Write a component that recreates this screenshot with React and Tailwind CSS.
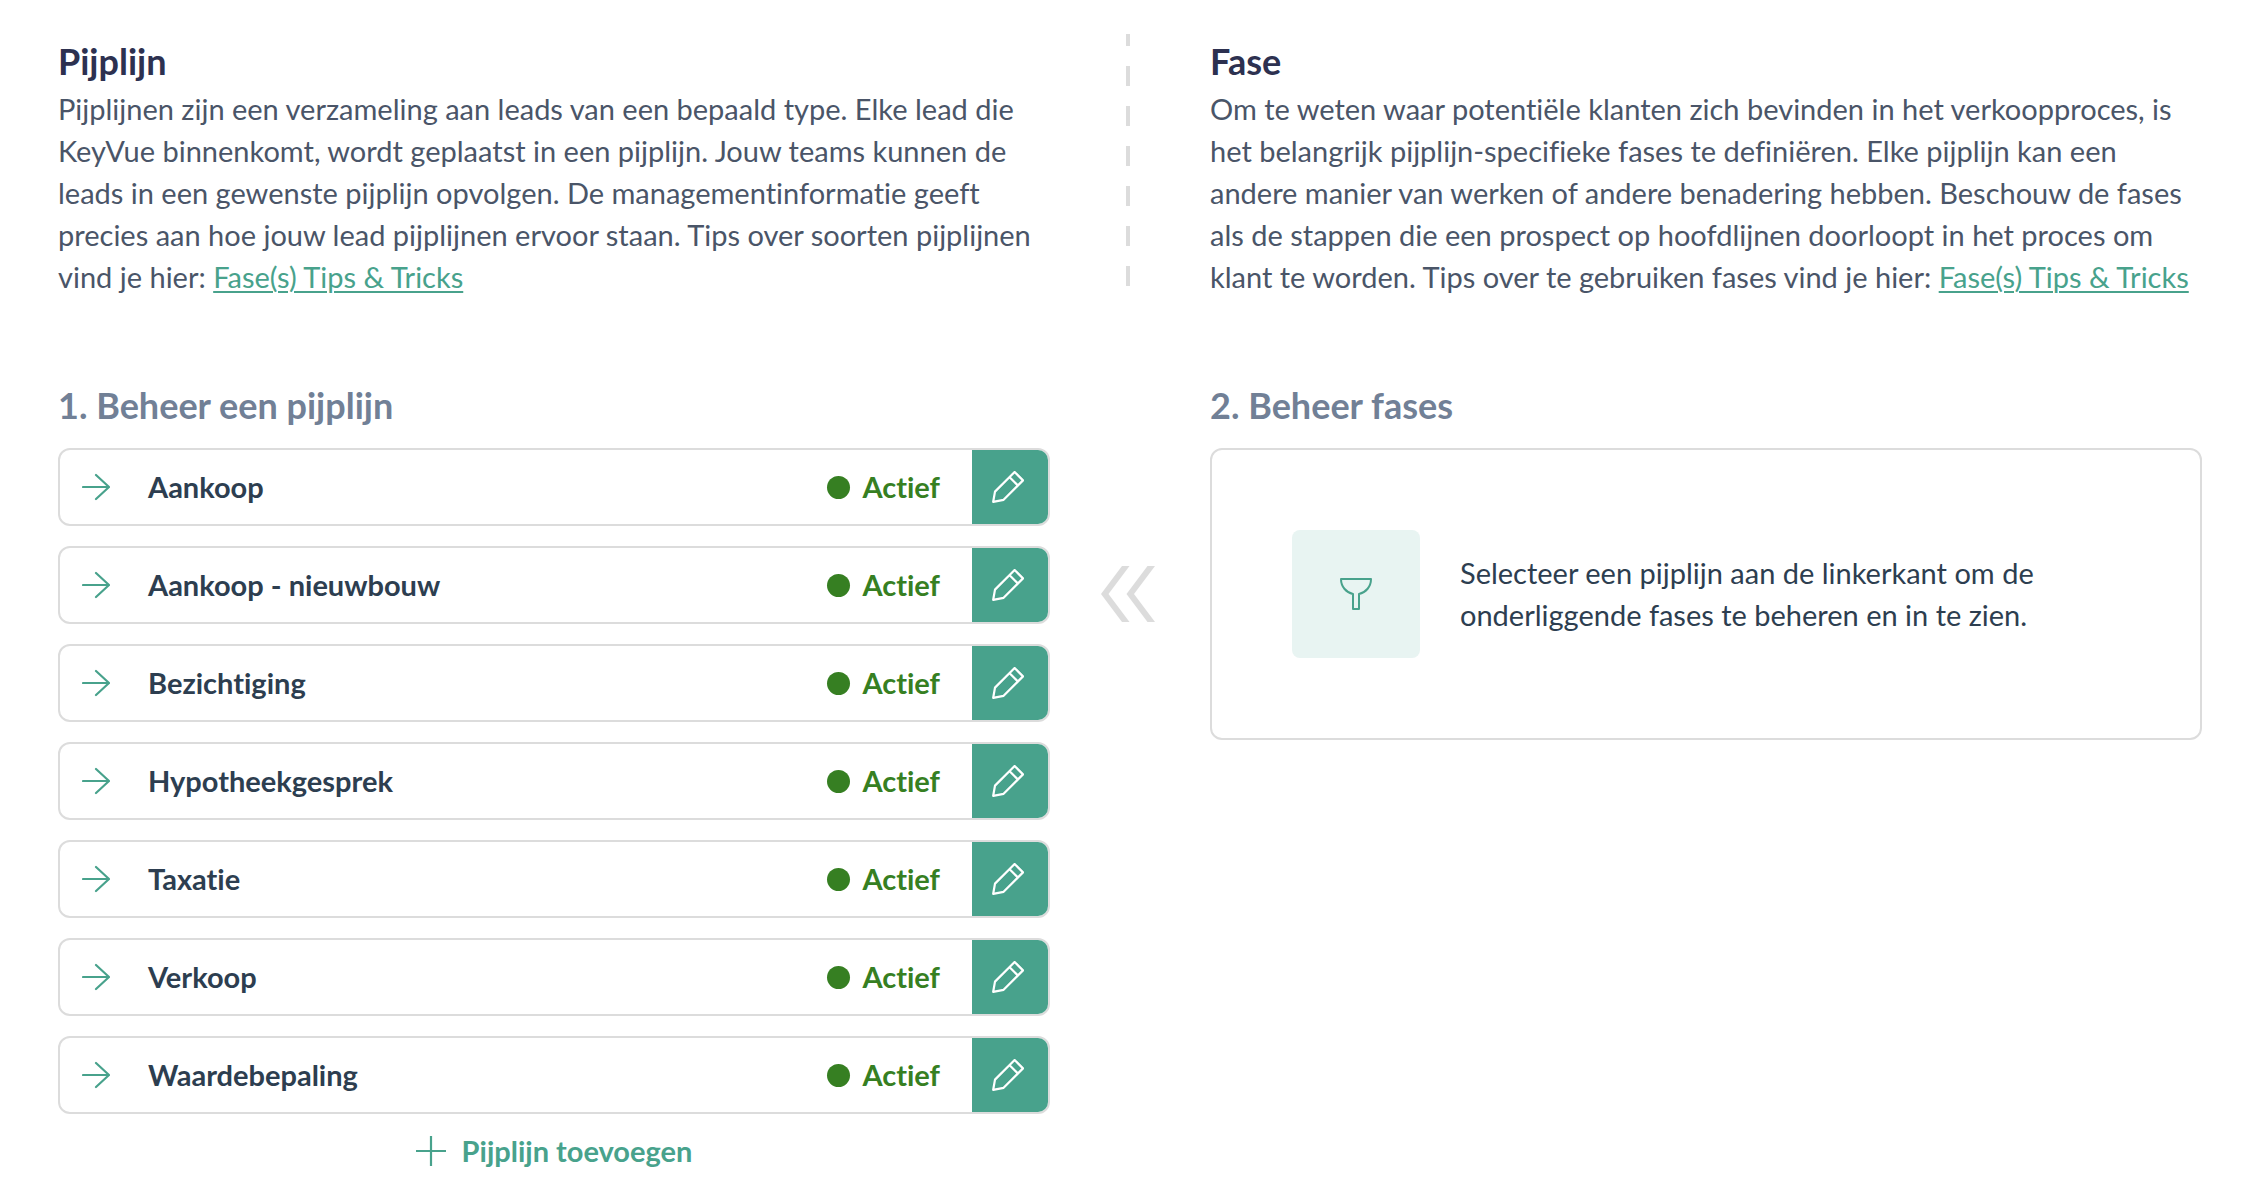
import React, { useState } from 'react';

const PIPELINES = [
  'Aankoop',
  'Aankoop - nieuwbouw',
  'Bezichtiging',
  'Hypotheekgesprek',
  'Taxatie',
  'Verkoop',
  'Waardebepaling',
];

const ArrowIcon = () => (
  <svg viewBox="0 0 28 28" className="size-7 shrink-0" fill="none" stroke="#48a28c" strokeWidth="2.2" strokeLinecap="round" strokeLinejoin="round" aria-hidden="true">
    <path d="M1 14h26M14 2l13 12-13 12" />
  </svg>
);

const PencilIcon = () => (
  <svg viewBox="0 0 32 32" className="size-8" fill="none" stroke="#fff" strokeWidth="2.2" strokeLinejoin="round" aria-hidden="true">
    <path d="M1.2 30.8 3 20.6 22.6 1 31 9.400 11.600 28.800Z" />
    <path d="m17.600 6.200 8.200 8.200" />
  </svg>
);

const FunnelIcon = () => (
  <svg viewBox="0 0 32 32" className="size-8" fill="none" stroke="#48a28c" strokeWidth="2" strokeLinejoin="round" aria-hidden="true">
    <path d="M1 1h30c0 7.500-5 13.500-12 15v15h-6V16C6 14.500 1 8.500 1 1z" />
  </svg>
);

const PlusIcon = () => (
  <svg viewBox="0 0 30 30" className="size-[30px]" fill="none" stroke="#48a28c" strokeWidth="2.2" aria-hidden="true">
    <path d="M15 0v30M0 15h30" />
  </svg>
);

const ChevronsIcon = () => (
  <svg viewBox="0 0 54 56" className="h-14 w-[54px]" fill="#dcdcdc" aria-hidden="true">
    <path d="M21 0h7.500L7.500 28l21 28H21L0 28z" />
    <path d="M46.500 0H54L33 28l21 28h-7.500l-21-28z" />
  </svg>
);

function Intro({ title, children }) {
  return (
    <section>
      <h2 className="text-4xl leading-[54px] font-bold text-[#2d3150]">{title}</h2>
      <p className="text-[29px] leading-[42px] text-[#4a5568]">
        {children}{' '}
        <a href="#tips" className="text-[#48a28c] underline decoration-2 underline-offset-3">
          Fase(s) Tips &amp; Tricks
        </a>
      </p>
    </section>
  );
}

function PipelineRow({ name, onSelect }) {
  return (
    <li className="flex h-[78px] overflow-hidden rounded-xl border-2 border-[#dcdcdc]">
      <button type="button" onClick={onSelect} className="flex flex-1 items-center pr-8 pl-[22px] text-left">
        <ArrowIcon />
        <span className="flex-1 pl-[38px] text-[29px] leading-[42px] font-bold text-[#2d3e50]">{name}</span>
        <span className="flex items-center gap-3 text-[29px] leading-[42px] font-bold text-[#367f22]">
          <span className="size-[23px] rounded-full bg-[#367f22]" />
          Actief
        </span>
      </button>
      <button type="button" aria-label={`${name} bewerken`} className="flex w-[76px] items-center bg-[#48a28c] pl-5">
        <PencilIcon />
      </button>
    </li>
  );
}

function App() {
  const [, setSelected] = useState(null);

  return (
    <main className="bg-white pt-[34px] pr-14 pb-4 pl-[58px] font-['Lato',sans-serif] [font-variant-ligatures:no-common-ligatures]">
      {/* Uitleg */}
      <div className="grid grid-cols-[1fr_160px_1fr]">
        <Intro title="Pijplijn">
          Pijplijnen zijn een verzameling aan leads van een bepaald type. Elke lead die KeyVue binnenkomt, wordt
          geplaatst in een pijplijn. Jouw teams kunnen de leads in een gewenste pijplijn opvolgen. De
          managementinformatie geeft precies aan hoe jouw lead pijplijnen ervoor staan. Tips over soorten pijplijnen
          vind je hier:
        </Intro>
        <div className="flex justify-center pr-1 pb-3">
          <div className="w-1 bg-[repeating-linear-gradient(to_top,#dcdcdc_0_20px,transparent_20px_40px)]" />
        </div>
        <Intro title="Fase">
          Om te weten waar potentiële klanten zich bevinden in het verkoopproces, is het belangrijk pijplijn-specifieke
          fases te definiëren. Elke pijplijn kan een andere manier van werken of andere benadering hebben. Beschouw de
          fases als de stappen die een prospect op hoofdlijnen doorloopt in het proces om klant te worden. Tips over te
          gebruiken fases vind je hier:
        </Intro>
      </div>

      {/* Beheer */}
      <div className="mt-20 grid grid-cols-[1fr_160px_1fr]">
        <section>
          <h2 className="text-4xl leading-[54px] font-bold text-[#718096]">1. Beheer een pijplijn</h2>
          <ul className="mt-4 flex flex-col gap-5">
            {PIPELINES.map((name) => (
              <PipelineRow key={name} name={name} onSelect={() => setSelected(name)} />
            ))}
          </ul>
          <button type="button" className="mx-auto mt-4 flex items-center gap-4 text-[29px] leading-[42px] font-bold text-[#48a28c]">
            <PlusIcon />
            Pijplijn toevoegen
          </button>
        </section>
        <div className="flex justify-center pt-[188px] pr-1">
          <ChevronsIcon />
        </div>
        <section>
          <h2 className="text-4xl leading-[54px] font-bold text-[#718096]">2. Beheer fases</h2>
          <div className="mt-4 flex items-center gap-10 rounded-xl border-2 border-[#dcdcdc] p-20">
            <div className="flex size-32 shrink-0 items-center justify-center rounded-lg bg-[#e8f4f2]">
              <FunnelIcon />
            </div>
            <p className="max-w-[600px] text-[29px] leading-[42px] text-[#2d3e50]">
              Selecteer een pijplijn aan de linkerkant om de onderliggende fases te beheren en in te zien.
            </p>
          </div>
        </section>
      </div>
    </main>
  );
}

export default App;
